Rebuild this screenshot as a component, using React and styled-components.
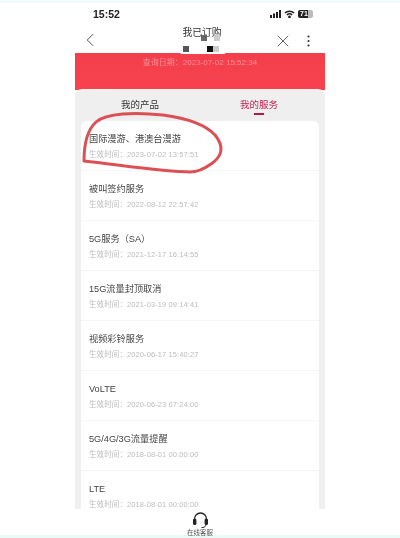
import React from "react";
import styled, { createGlobalStyle } from "styled-components";
import { ChevronLeft, X } from "lucide-react";

const GlobalStyle = createGlobalStyle`
  html, body {
    margin: 0;
    padding: 0;
    background: #fff;
  }
`;

const Page = styled.div`
  position: relative;
  width: 400px;
  height: 538px;
  overflow: hidden;
  display: flex;
  flex-direction: column;
  align-items: center;
  background: #fff;
  font-family: "Liberation Sans", "Noto Sans CJK SC", sans-serif;
  filter: blur(0.45px);
`;

const TopTint = styled.div`
  flex: none;
  width: 100%;
  height: 3px;
  background: #f1fbfb;
`;

const StatusBar = styled.div`
  flex: none;
  width: 220px;
  height: 21px;
  margin-left: 6px;
  display: flex;
  align-items: center;
  justify-content: space-between;
`;

const Time = styled.span`
  font-size: 10.5px;
  font-weight: 700;
  color: #222;
`;

const StatusIcons = styled.div`
  display: flex;
  align-items: center;
  gap: 3px;
`;

const Battery = styled.span`
  width: 15px;
  height: 8px;
  border-radius: 2px;
  background: linear-gradient(90deg, #222 70%, #bbb 70%);
  color: #fff;
  font-size: 7px;
  font-weight: 700;
  line-height: 8px;
  padding-left: 2px;
  box-sizing: border-box;
`;

const NavBar = styled.div`
  flex: none;
  width: 250px;
  height: 29px;
  display: flex;
  align-items: center;
  color: #444;
`;

const NavLeft = styled.div`
  width: 30px;
  box-sizing: border-box;
  display: flex;
  padding-left: 4px;
  margin-top: 3px;
`;

const NavTitle = styled.div`
  flex: 1;
  text-align: center;
  font-size: 9.8px;
  color: #333;
  margin-top: -13px;
  padding-left: 26px;
`;

const NavRight = styled.div`
  display: flex;
  align-items: center;
  gap: 13.5px;
  margin-top: 5px;
  padding-right: 15.5px;
`;

const Censor = styled.span`
  position: absolute;
  width: ${(p) => p.$w}px;
  height: 6px;
  left: ${(p) => p.$x}px;
  top: ${(p) => p.$y}px;
  background: ${(p) => p.$c};
`;

const Notch = styled.span`
  position: absolute;
  left: 180px;
  top: 52px;
  width: 46px;
  height: 2px;
  border-radius: 0 0 3px 3px;
  background: #fff;
`;

const Hero = styled.div`
  flex: none;
  width: 250px;
  height: 37px;
  box-sizing: border-box;
  padding-top: 3px;
  text-align: center;
  font-size: 8px;
  color: #f48d95;
  background: linear-gradient(#f33f4b, #f8434f);
`;

const Panel = styled.div`
  flex: 1;
  width: 250px;
  min-height: 0;
  margin-top: -1px;
  box-sizing: border-box;
  padding: 0 6px;
  background: #efefef;
  border-radius: 7px 7px 0 0;
  overflow: hidden;
  display: flex;
  flex-direction: column;
`;

const Tabs = styled.div`
  flex: none;
  height: 32px;
  display: grid;
  grid-template-columns: 118px 1fr;
`;

const Tab = styled.div`
  padding-top: 8px;
  text-align: center;
  font-size: 9.5px;
  color: ${(p) => (p.$active ? "#c2234f" : "#333")};
  &::after {
    content: "";
    display: ${(p) => (p.$active ? "block" : "none")};
    width: 10px;
    height: 2px;
    margin: 2px auto 0;
    background: #b51a44;
  }
`;

const Card = styled.div`
  flex: 1;
  min-height: 0;
  background: #fff;
  border-radius: 6px 6px 0 0;
  overflow: hidden;
`;

const Row = styled.div`
  height: 50px;
  box-sizing: border-box;
  padding: 11px 8px 0;
  border-bottom: 1px solid #f6f6f6;
`;

const RowTitle = styled.div`
  font-size: 9.2px;
  line-height: 14px;
  color: #444;
`;

const RowMeta = styled.div`
  margin-top: 5px;
  font-size: 7.5px;
  line-height: 8px;
  letter-spacing: 0.1px;
  color: #bcbcbc;
`;

const Footer = styled.div`
  flex: none;
  width: 100%;
  height: 29px;
  box-sizing: border-box;
  padding-top: 3px;
  display: flex;
  flex-direction: column;
  align-items: center;
  background: linear-gradient(#fff 26px, #eafaf8 26px);
`;

const FooterLabel = styled.div`
  font-size: 6.5px;
  line-height: 8px;
  color: #555;
`;

const Scribble = styled.svg`
  position: absolute;
  left: 0;
  top: 0;
  pointer-events: none;
`;

const services = [
  ["国际漫游、港澳台漫游", "2023-07-02 13:57:51"],
  ["被叫签约服务", "2022-08-12 22:57:42"],
  ["5G服务（SA）", "2021-12-17 16:14:55"],
  ["15G流量封顶取消", "2021-03-19 09:14:41"],
  ["视频彩铃服务", "2020-06-17 15:40:27"],
  ["VoLTE", "2020-06-23 07:24:00"],
  ["5G/4G/3G流量提醒", "2018-08-01 00:00:00"],
  ["LTE", "2018-08-01 00:00:00"],
];

function Signal() {
  return (
    <svg width="11" height="8" viewBox="0 0 11 8" fill="#222">
      <rect x="0" y="5" width="2" height="3" />
      <rect x="3" y="3.5" width="2" height="4.5" />
      <rect x="6" y="2" width="2" height="6" />
      <rect x="9" y="0" width="2" height="8" />
    </svg>
  );
}

function Wifi() {
  return (
    <svg width="11" height="8" viewBox="0 0 11 8" fill="none" stroke="#222" strokeWidth="1.4">
      <path d="M0.8 3 A7 7 0 0 1 10.2 3" />
      <path d="M2.8 5 A4 4 0 0 1 8.2 5" />
      <circle cx="5.5" cy="7" r="0.7" fill="#222" />
    </svg>
  );
}

function Headset() {
  return (
    <svg width="17" height="17" viewBox="0 0 17 17" fill="none">
      <path d="M2.5 9 V7 A6 6 0 0 1 14.5 7 V9" stroke="#222" strokeWidth="1.3" />
      <rect x="1" y="6.5" width="3.4" height="6.5" rx="1.6" fill="#222" />
      <rect x="12.6" y="6.5" width="3.4" height="6.5" rx="1.6" fill="#222" />
      <path d="M14 13 C13.5 15 11.5 15.6 9.5 15.6" stroke="#222" strokeWidth="1" />
    </svg>
  );
}

export default function App() {
  return (
    <Page>
      <GlobalStyle />
      <TopTint />
      <StatusBar>
        <Time>15:52</Time>
        <StatusIcons>
          <Signal />
          <Wifi />
          <Battery>71</Battery>
        </StatusIcons>
      </StatusBar>
      <NavBar>
        <NavLeft>
          <ChevronLeft size={22} strokeWidth={1} />
        </NavLeft>
        <NavTitle>我已订购</NavTitle>
        <NavRight>
          <X size={20} strokeWidth={1} />
          <svg width="3" height="12" viewBox="0 0 3 12" fill="#333">
            <circle cx="1.5" cy="1.5" r="1.1" />
            <circle cx="1.5" cy="6" r="1.1" />
            <circle cx="1.5" cy="10.5" r="1.1" />
          </svg>
        </NavRight>
      </NavBar>
      <Censor $x={201} $y={35} $w={6} $c="#666" />
      <Censor $x={214} $y={35} $w={6} $c="#ccc" />
      <Censor $x={183} $y={46} $w={6} $c="#555" />
      <Censor $x={207} $y={46} $w={6} $c="#111" />
      <Censor $x={213} $y={46} $w={6} $c="#ccc" />
      <Hero>查询日期：2023-07-02 15:52:34</Hero>
      <Notch />
      <Panel>
        <Tabs>
          <Tab>我的产品</Tab>
          <Tab $active>我的服务</Tab>
        </Tabs>
        <Card>
          {services.map(([name, time]) => (
            <Row key={name}>
              <RowTitle>{name}</RowTitle>
              <RowMeta>生效时间：{time}</RowMeta>
            </Row>
          ))}
        </Card>
      </Panel>
      <Footer>
        <Headset />
        <FooterLabel>在线客服</FooterLabel>
      </Footer>
      <Scribble width="400" height="538" viewBox="0 0 400 538" fill="none">
        <path
          d="M84 161 C84 148 86 131 96 122 C106 113 135 112 163 115 C185 118 205 124 215 135 C224 146 223 156 211 164 C204 169 198 172 190 172 C165 172 120 165 84 161"
          stroke="#dc5055"
          strokeWidth="3"
          strokeLinecap="round"
        />
      </Scribble>
    </Page>
  );
}
